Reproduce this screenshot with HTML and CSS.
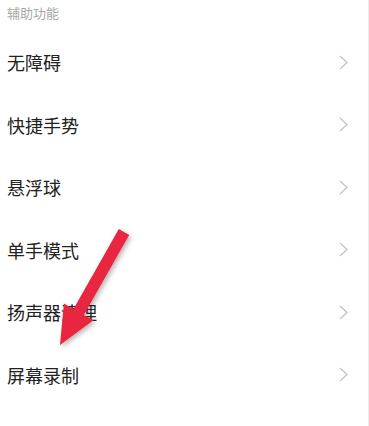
FILE: index.html
```html
<!doctype html>
<html lang="zh-CN">
 <head>
  <meta charset="UTF-8">
  <title>辅助功能</title>
  <link rel="stylesheet" href="styles.css">
 </head>
 <body>
  <section class="page">
   <div class="title">辅助功能</div>
   <ul class="list">
    <li class="item"><span>无障碍</span><svg class="chev" viewBox="0 0 9 15"><path d="M1 1 L8 7.5 L1 14"/></svg></li>
    <li class="item"><span>快捷手势</span><svg class="chev" viewBox="0 0 9 15"><path d="M1 1 L8 7.5 L1 14"/></svg></li>
    <li class="item"><span>悬浮球</span><svg class="chev" viewBox="0 0 9 15"><path d="M1 1 L8 7.5 L1 14"/></svg></li>
    <li class="item"><span>单手模式</span><svg class="chev" viewBox="0 0 9 15"><path d="M1 1 L8 7.5 L1 14"/></svg></li>
    <li class="item"><span>扬声器清理</span><svg class="chev" viewBox="0 0 9 15"><path d="M1 1 L8 7.5 L1 14"/></svg></li>
    <li class="item"><span>屏幕录制</span><svg class="chev" viewBox="0 0 9 15"><path d="M1 1 L8 7.5 L1 14"/></svg></li>
   </ul>
   <!-- red pointer drawn over the list -->
   <svg class="pointer" width="369" height="426" viewBox="0 0 369 426">
    <defs>
     <filter id="sh" x="-30%" y="-30%" width="160%" height="160%">
      <feDropShadow dx="2" dy="2" stdDeviation="2.5" flood-color="#000" flood-opacity="0.3"/>
     </filter>
    </defs>
    <polygon filter="url(#sh)" fill="#e8283f"
      points="129.2,235 83.9,314.9 93.5,320.3 60,345 63.9,303.5 73.5,308.9 118.8,229"/>
   </svg>
  </section>
 </body>
</html>
```
FILE: styles.css
```css
*
{
  margin: 0;
  padding: 0;
  box-sizing: border-box;
}
body
{
  background: #fff;
  font-family: 'Noto Sans CJK SC', 'Noto Sans', sans-serif;
}
.page
{
  position: relative;
  width: 369px;
  height: 426px;
  overflow: hidden;
  border-right: 1px solid #ececec;
}
.title
{
  height: 31px;
  line-height: 26px;
  padding-left: 7px;
  font-size: 13px;
  color: #a8a8a8;
}
.list
{
  list-style: none;
}
.item
{
  height: 62.5px;
  display: flex;
  align-items: center;
  justify-content: space-between;
  padding: 0 20px 0 7px;
  font-size: 18px;
  color: #222;
}
.chev
{
  width: 9px;
  height: 15px;
  fill: none;
  stroke: #c4c4c4;
  stroke-width: 1.3;
}
.pointer
{
  position: absolute;
  left: 0;
  top: 0;
  pointer-events: none;
}
```
